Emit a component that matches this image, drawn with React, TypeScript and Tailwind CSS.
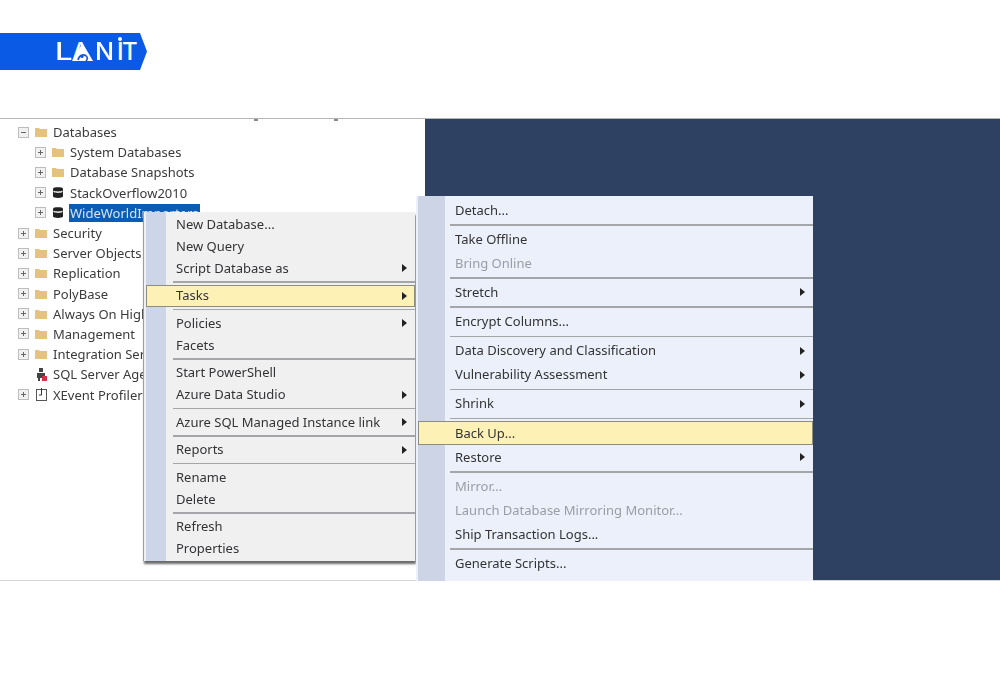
import React from 'react';

type TreeRow = { label: string; level: number; icon: 'folder' | 'db' | 'agent' | 'xevent'; box?: 'plus' | 'minus' | 'none'; selected?: boolean };
type MenuEntry = { label?: string; arrow?: boolean; active?: boolean; disabled?: boolean; sep?: boolean };

const treeRows: TreeRow[] = [
  { label: 'Databases', level: 0, icon: 'folder', box: 'minus' },
  { label: 'System Databases', level: 1, icon: 'folder' },
  { label: 'Database Snapshots', level: 1, icon: 'folder' },
  { label: 'StackOverflow2010', level: 1, icon: 'db' },
  { label: 'WideWorldImporters', level: 1, icon: 'db', selected: true },
  { label: 'Security', level: 0, icon: 'folder' },
  { label: 'Server Objects', level: 0, icon: 'folder' },
  { label: 'Replication', level: 0, icon: 'folder' },
  { label: 'PolyBase', level: 0, icon: 'folder' },
  { label: 'Always On High Availability', level: 0, icon: 'folder' },
  { label: 'Management', level: 0, icon: 'folder' },
  { label: 'Integration Services Catalogs', level: 0, icon: 'folder' },
  { label: 'SQL Server Agent', level: 0, icon: 'agent', box: 'none' },
  { label: 'XEvent Profiler', level: 0, icon: 'xevent' },
];

const contextMenu: MenuEntry[] = [
  { label: 'New Database...' },
  { label: 'New Query' },
  { label: 'Script Database as', arrow: true },
  { sep: true },
  { label: 'Tasks', arrow: true, active: true },
  { sep: true },
  { label: 'Policies', arrow: true },
  { label: 'Facets' },
  { sep: true },
  { label: 'Start PowerShell' },
  { label: 'Azure Data Studio', arrow: true },
  { sep: true },
  { label: 'Azure SQL Managed Instance link', arrow: true },
  { sep: true },
  { label: 'Reports', arrow: true },
  { sep: true },
  { label: 'Rename' },
  { label: 'Delete' },
  { sep: true },
  { label: 'Refresh' },
  { label: 'Properties' },
];

const tasksMenu: MenuEntry[] = [
  { label: 'Detach...' },
  { sep: true },
  { label: 'Take Offline' },
  { label: 'Bring Online', disabled: true },
  { sep: true },
  { label: 'Stretch', arrow: true },
  { sep: true },
  { label: 'Encrypt Columns...' },
  { sep: true },
  { label: 'Data Discovery and Classification', arrow: true },
  { label: 'Vulnerability Assessment', arrow: true },
  { sep: true },
  { label: 'Shrink', arrow: true },
  { sep: true },
  { label: 'Back Up...', active: true },
  { label: 'Restore', arrow: true },
  { sep: true },
  { label: 'Mirror...', disabled: true },
  { label: 'Launch Database Mirroring Monitor...', disabled: true },
  { label: 'Ship Transaction Logs...' },
  { sep: true },
  { label: 'Generate Scripts...' },
];

const ExpandBox = ({ kind }: { kind: 'plus' | 'minus' | 'none' }) => {
  if (kind === 'none') return <span className="w-[11px] h-[11px]" />;
  return (
    <svg width="11" height="11" viewBox="0 0 11 11" className="shrink-0">
      <rect x="0.5" y="0.5" width="10" height="10" fill="#f1f1f1" stroke="#bdbdbd" />
      <path d="M3 5.5h5" stroke="#666" />
      {kind === 'plus' && <path d="M5.5 3v5" stroke="#666" />}
    </svg>
  );
};

const TreeIcon = ({ icon }: { icon: TreeRow['icon'] }) => {
  if (icon === 'folder') {
    return (
      <svg width="12" height="10" viewBox="0 0 12 10" className="shrink-0">
        <path d="M0 1h4l1 1h7v8H0z" fill="#e6c27f" />
      </svg>
    );
  }
  if (icon === 'db') {
    return (
      <svg width="12" height="13" viewBox="0 0 12 13" className="shrink-0">
        <path d="M1 2.5C1 .8 11 .8 11 2.5v8c0 1.9-10 1.9-10 0z" fill="#222" />
        <path d="M1.5 4.5c2 1.2 7 1.2 9 0v1.6c-2 1.2-7 1.2-9 0z" fill="#eee" />
      </svg>
    );
  }
  if (icon === 'agent') {
    return (
      <svg width="12" height="14" viewBox="0 0 12 14" className="shrink-0">
        <path d="M4 1h4v4H4zM2 6h8v5H2zM3 11h2v3H3z" fill="#444" />
        <rect x="7" y="9" width="5" height="5" fill="#d9304a" />
      </svg>
    );
  }
  return (
    <svg width="11" height="13" viewBox="0 0 11 13" className="shrink-0">
      <rect x="0.5" y="1.5" width="10" height="11" fill="#fff" stroke="#555" />
      <path d="M5.5 0v7H3" stroke="#333" fill="none" />
    </svg>
  );
};

const Row = ({ row }: { row: TreeRow }) => (
  <div className={`flex items-center h-[20.2px] ${row.level === 1 ? 'pl-[35px]' : 'pl-[18px]'}`}>
    <ExpandBox kind={row.box ?? 'plus'} />
    <span className="ml-[6px] w-[12px] flex justify-center">
      <TreeIcon icon={row.icon} />
    </span>
    <span
      className={`ml-[5px] h-[18px] leading-[18px] whitespace-nowrap px-[1px] ${
        row.selected ? 'bg-[#0b5cb4] text-[#d5e4f5] w-[131px]' : 'text-[#3b3b3b]'
      }`}
    >
      {row.label}
    </span>
  </div>
);

const Arrow = () => (
  <svg width="5" height="8" viewBox="0 0 5 8" className="absolute right-[8px] top-1/2 -translate-y-1/2">
    <path d="M0 0l5 4-5 4z" fill="#222" />
  </svg>
);

const Menu = ({ items, rowClass, textClass, sepClass }: { items: MenuEntry[]; rowClass: string; textClass: string; sepClass: string }) => (
  <>
    {items.map((item, i) =>
      item.sep ? (
        <div key={i} className={sepClass}>
          <div className="h-[1.5px] bg-[#a4a5a9]" />
        </div>
      ) : (
        <div
          key={i}
          className={`${rowClass} relative flex items-center whitespace-nowrap ${
            item.active ? 'bg-[#fdf1b6] outline outline-1 -outline-offset-1 outline-[#8d8d7e]' : ''
          } ${item.disabled ? 'text-[#9a9da3]' : 'text-[#333336]'}`}
        >
          <span className={textClass}>{item.label}</span>
          {item.arrow && <Arrow />}
        </div>
      )
    )}
  </>
);

const App = () => {
  return (
    <div className="w-[1000px] h-[700px] bg-white overflow-hidden font-['Noto_Sans',sans-serif] text-[13px]">
      {/* Logo band */}
      <div className="h-[118px] pt-[33px]">
        <div className="w-[147px] h-[37px] bg-[#0a5ae6] [clip-path:polygon(0_0,140px_0,147px_50%,140px_100%,0_100%)] flex items-center pl-[55px]">
          <span className="relative font-['Inter',sans-serif] font-medium text-[24px] leading-none text-white flex items-end">
            <span className="w-[17px] inline-block origin-left scale-x-[1.3]">L</span>
            <span className="relative w-[23px]">
              A
              <svg width="21" height="18" viewBox="0 0 21 18" className="absolute left-0 bottom-[3px]">
                <path d="M10.5 0L21 18H0z" fill="#fff" />
                <path d="M6 17c1-5 7-7 9-3 1 2 0 3-1 4" fill="none" stroke="#0a5ae6" strokeWidth="1.6" />
                <circle cx="10" cy="13.5" r="1.6" fill="#0a5ae6" />
              </svg>
            </span>
            <span className="w-[22px] inline-block origin-left scale-x-[1.05]">N</span>
            <span className="relative w-[5px]">
              I
              <span className="absolute left-[0.5px] top-[-3px] w-[4px] h-[4px] rounded-full bg-white" />
            </span>
            <span>T</span>
          </span>
        </div>
      </div>

      {/* Screenshot area */}
      <div className="relative h-[463px] flex border-t border-[#b5b5b5] overflow-hidden [filter:blur(0.7px)]">
        <div className="w-[425px] bg-white pt-[3px]">
          {treeRows.map((row) => (
            <Row key={row.label} row={row} />
          ))}
        </div>
        <div className="flex-1 bg-[#2f4163]" />

        {/* cut-off text specks along the top edge */}
        <div className="absolute left-[254px] top-0 w-[4px] h-[2px] bg-[#888]" />
        <div className="absolute left-[334px] top-0 w-[4px] h-[2px] bg-[#888]" />

        {/* bottom edge of the screenshot */}
        <div className="absolute left-0 right-0 bottom-0 h-[1px] bg-[#d5d5d5]" />

        {/* Context menu */}
        <div className="absolute left-[143px] top-[93px] w-[272px] pt-[1px] pb-[1px] pl-[2px] bg-[#f1f0f1] shadow-[1px_3px_2px_rgba(70,70,70,0.8)] border-l border-[#9aa0aa]">
          <div className="absolute left-[2px] top-0 bottom-0 w-[20px] bg-[#cdd6e8]" />
          <Menu
            items={contextMenu}
            rowClass="h-[22px] pl-[30px]"
            textClass="relative text-[13px] leading-none"
            sepClass="relative h-[5.5px] pl-[27px] pt-[2px]"
          />
        </div>

        {/* Tasks submenu */}
        <div className="absolute left-[416px] top-[77px] w-[397px] pt-[2px] pl-[2px] pb-[20px] bg-[#ecf0fb]">
          <div className="absolute left-[2px] top-0 bottom-0 w-[27px] bg-[#ccd4e5]" />
          <Menu
            items={tasksMenu}
            rowClass="h-[24px] pl-[37px]"
            textClass="relative text-[13px] leading-none"
            sepClass="relative h-[5.2px] pl-[32px] pt-[2px]"
          />
        </div>
      </div>
    </div>
  );
};

export default App;
